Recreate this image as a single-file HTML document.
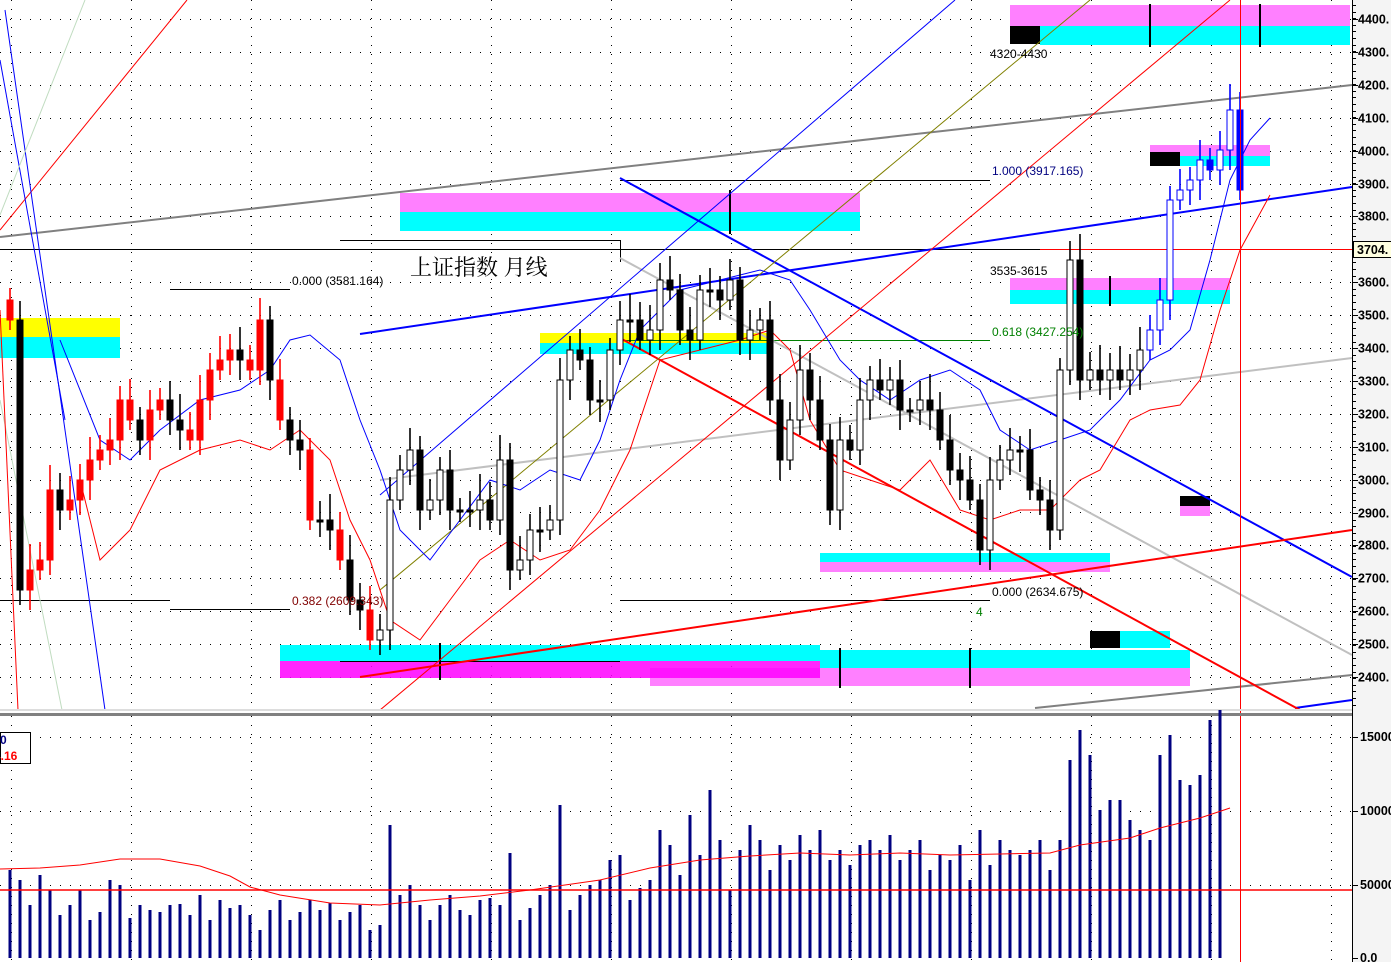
<!DOCTYPE html>
<html><head><meta charset="utf-8"><style>
body{margin:0;background:#fff;width:1391px;height:962px;overflow:hidden}
svg{display:block;font-family:"Liberation Sans","Noto Sans CJK SC",sans-serif}
.ax{font-size:12.5px;font-weight:bold}
</style></head><body>
<svg id="s" width="1391" height="962" xmlns="http://www.w3.org/2000/svg">
<rect width="1391" height="962" fill="#fff"/>
<g id="grid" stroke="#000" stroke-dasharray="1,9" stroke-width="1"></g>
<rect x="1010" y="5" width="340" height="21" fill="#ff80ff"/>
<rect x="1040" y="26" width="310" height="19" fill="#00ffff"/>
<rect x="1010" y="26" width="30" height="18" fill="#000"/>
<rect x="400" y="193" width="460" height="19" fill="#ff80ff"/>
<rect x="400" y="212" width="460" height="19" fill="#00ffff"/>
<rect x="0" y="318" width="120" height="19" fill="#ffff00"/>
<rect x="0" y="337" width="120" height="21" fill="#00ffff"/>
<rect x="540" y="333" width="230" height="10" fill="#ffff00"/>
<rect x="540" y="343" width="230" height="11" fill="#00ffff"/>
<rect x="1010" y="278" width="220" height="12" fill="#ff80ff"/>
<rect x="1010" y="290" width="220" height="14" fill="#00ffff"/>
<rect x="1150" y="145" width="120" height="11" fill="#ff80ff"/>
<rect x="1150" y="156" width="120" height="10" fill="#00ffff"/>
<rect x="1150" y="152" width="30" height="14" fill="#000"/>
<rect x="1180" y="496" width="30" height="10" fill="#000"/>
<rect x="1180" y="506" width="30" height="10" fill="#ff80ff"/>
<rect x="820" y="553" width="290" height="9" fill="#00ffff"/>
<rect x="820" y="562" width="290" height="10" fill="#ff80ff"/>
<rect x="650" y="668" width="540" height="18" fill="#ff80ff"/>
<rect x="820" y="650" width="370" height="18" fill="#00ffff"/>
<rect x="280" y="645" width="540" height="16" fill="#00ffff"/>
<rect x="280" y="661" width="540" height="17" fill="#ff00ff" opacity=".85"/>
<rect x="1090" y="631" width="80" height="17" fill="#00ffff"/>
<rect x="1090" y="631" width="30" height="17" fill="#000"/>
<g stroke="#000" stroke-width="2">
<line x1="1150" y1="4" x2="1150" y2="47"/><line x1="1260" y1="4" x2="1260" y2="47"/>
<line x1="730" y1="190" x2="730" y2="234"/><line x1="1110" y1="276" x2="1110" y2="306"/>
<line x1="440" y1="643" x2="440" y2="680"/><line x1="840" y1="648" x2="840" y2="688"/><line x1="970" y1="648" x2="970" y2="688"/>
</g>
<g stroke="#000" stroke-width="1">
<line x1="0" y1="249.5" x2="1352" y2="249.5"/>
<line x1="620" y1="180.5" x2="990" y2="180.5"/>
<line x1="170" y1="289.5" x2="290" y2="289.5"/>
<polyline points="340,240.5 620.5,240.5 620.5,262" fill="none"/>
<line x1="0" y1="600.5" x2="170" y2="600.5"/>
<line x1="170" y1="609.5" x2="290" y2="609.5"/>
<line x1="620" y1="600.5" x2="990" y2="600.5"/>
<line x1="340" y1="661.5" x2="620" y2="661.5"/>
</g>
<line x1="620" y1="340.5" x2="990" y2="340.5" stroke="#008000"/>
<line x1="1040" y1="249.5" x2="1352" y2="249.5" stroke="#f00"/>
<g fill="none">
<line x1="0" y1="237" x2="1352" y2="85" stroke="#808080" stroke-width="2"/>
<line x1="380" y1="480" x2="1352" y2="358" stroke="#c0c0c0" stroke-width="2"/>
<line x1="620" y1="258" x2="1352" y2="655" stroke="#c0c0c0" stroke-width="2"/>
<line x1="1035" y1="708" x2="1352" y2="675" stroke="#808080" stroke-width="2"/>
<line x1="360" y1="334" x2="1352" y2="187" stroke="#0000ff" stroke-width="2"/>
<line x1="620" y1="178" x2="1352" y2="577" stroke="#0000ff" stroke-width="2"/>
<line x1="1295" y1="708" x2="1352" y2="700" stroke="#0000ff" stroke-width="2"/>
<line x1="620" y1="338" x2="1300" y2="710" stroke="#f00" stroke-width="2"/>
<line x1="360" y1="677" x2="1352" y2="530" stroke="#f00" stroke-width="2"/>
<line x1="380" y1="495" x2="955" y2="0" stroke="#0000ff"/>
<line x1="380" y1="710" x2="1230" y2="0" stroke="#f00"/>
<line x1="380" y1="590" x2="1090" y2="0" stroke="#808000"/>
<line x1="0" y1="230" x2="187" y2="0" stroke="#f00"/>
<line x1="5" y1="10" x2="105" y2="710" stroke="#0000ff"/>
<line x1="0" y1="60" x2="65" y2="420" stroke="#0000ff"/>
<line x1="85" y1="0" x2="0" y2="215" stroke="#c0dcc0"/>
<line x1="0" y1="400" x2="62" y2="710" stroke="#c0dcc0"/>
<line x1="0" y1="310" x2="18" y2="710" stroke="#f00"/>
<polyline stroke="#0000ff" points="60,340 100,440 130,460 160,430 200,400 240,390 270,370 290,340 310,335 340,360 360,420 380,470 400,530 430,560 460,520 490,480 520,490 550,470 580,480 600,440 620,380 640,330 680,290 720,280 760,270 790,280 810,310 840,360 860,380 890,400 920,380 950,370 980,390 1000,430 1030,450 1060,440 1090,430 1120,400 1150,360 1170,350 1190,330 1210,260 1230,180 1250,140 1270,118"/>
<polyline stroke="#f00" points="80,480 100,560 130,530 160,470 200,450 240,440 270,450 300,430 330,460 350,520 370,560 390,620 420,640 450,600 480,560 510,540 540,560 570,550 600,510 630,450 660,360 700,350 740,340 770,330 790,350 810,420 840,470 870,480 900,490 930,460 960,510 990,520 1020,510 1050,510 1080,480 1100,470 1130,420 1150,410 1180,405 1200,380 1220,310 1240,250 1270,195"/>
</g>
<g id="candles"></g>
<line x1="1240.5" y1="0" x2="1240.5" y2="962" stroke="#f00"/>
<g font-size="12">
<text x="990" y="58">4320-4430</text>
<text x="992" y="175" fill="#000080">1.000 (3917.165)</text>
<text x="292" y="285">0.000 (3581.164)</text>
<text x="990" y="275">3535-3615</text>
<text x="992" y="336" fill="#008000">0.618 (3427.254)</text>
<text x="292" y="605" fill="#800000">0.382 (2609.343)</text>
<text x="992" y="596">0.000 (2634.675)</text>
<text x="976" y="616" fill="#008000">4</text>
</g>
<text x="410" y="275" font-size="22" font-family="'Noto Serif CJK SC','Noto Sans CJK SC',serif">上证指数 月线</text>
<rect x="0" y="709" width="1391" height="2" fill="#ddd"/>
<rect x="0" y="713" width="1391" height="3" fill="#808080"/>
<g id="vol"></g>
<line x1="0" y1="890" x2="1352" y2="890" stroke="#f00" stroke-width="1.5"/>
<polyline fill="none" stroke="#f00" points="0,869 40,868 80,865 120,859 160,859 200,866 230,876 250,887 280,895 330,903 380,905 430,900 480,896 530,890 600,880 650,868 700,860 750,856 800,853 850,855 900,853 950,855 1000,854 1050,853 1080,845 1130,838 1160,828 1200,818 1230,808"/>
<rect x="0.5" y="732.5" width="30" height="31" fill="#fff" stroke="#000"/>
<text x="0" y="744" font-size="12" font-weight="bold" fill="#000080">0</text>
<text x="-6" y="760" font-size="12" font-weight="bold" fill="#f00">4.16</text>
<rect x="1352" y="0" width="39" height="962" fill="#f4f4f4"/>
<line x1="1352.5" y1="0" x2="1352.5" y2="962" stroke="#000"/>
<g id="axis" class="ax"></g>
<rect x="1353.5" y="241.5" width="38" height="16" fill="#ffffe0" stroke="#000"/>
<text x="1357" y="254" class="ax">3704.</text>
</svg>
<script>
var NS="http://www.w3.org/2000/svg",s=document.getElementById('s');
function el(p,t,a){var e=document.createElementNS(NS,t);for(var k in a)e.setAttribute(k,a[k]);p.appendChild(e);return e;}
var g=document.getElementById('grid');
for(var y=19;y<700;y+=32.9){var yy=Math.round(y)+.5;el(g,'line',{x1:0,y1:yy,x2:1352,y2:yy});}
for(var x=11.5;x<1352;x+=120){el(g,'line',{x1:x,y1:0,x2:x,y2:709,'stroke-dasharray':'1,8'});el(g,'line',{x1:x,y1:716,x2:x,y2:962,'stroke-dasharray':'1,8'});}
[737.5,811.5,885.5].forEach(function(y){el(g,'line',{x1:0,y1:y,x2:1352,y2:y});});
var ax=document.getElementById('axis');
for(var i=0;i<=20;i++){var p=4400-i*100,y=Math.round(19+i*32.9)+.5;if(p==3700)continue;el(ax,'line',{x1:1353,y1:y,x2:1358,y2:y,stroke:'#000'});var t=el(ax,'text',{x:1358,y:y+4});t.textContent=p+'.';}
for(var y=5;y<709;y+=6.6){var yy=Math.round(y)+.5;el(ax,'line',{x1:1353,y1:yy,x2:1356,y2:yy,stroke:'#000'});}
[[737,'15000'],[811,'10000'],[885,'50000'],[958,'0.0']].forEach(function(a){el(ax,'line',{x1:1353,y1:a[0]+.5,x2:1358,y2:a[0]+.5,stroke:'#000'});var t=el(ax,'text',{x:1360,y:a[0]+4});t.textContent=a[1];});
var c=[320,590,570,560,490,510,500,480,460,450,440,400,420,440,410,400,420,430,440,400,370,360,350,360,370,320,380,420,440,450,520,520,530,560,600,610,640,630,500,470,450,510,500,470,510,510,510,500,520,460,570,560,530,530,520,380,350,360,400,400,350,320,320,340,330,280,290,330,340,290,290,300,280,340,330,320,400,460,420,370,400,440,510,440,450,400,380,390,380,410,410,400,410,440,470,480,500,550,480,460,450,450,490,500,530,370,260,380,370,380,370,380,370,350,330,300,200,190,180,160,170,150,110,190];
var cg=document.getElementById('candles'),prev=300;
c.forEach(function(v,i){var x=10+i*10,up=v<prev,top=Math.min(v,prev),bot=Math.max(v,prev);if(bot-top<2)bot=top+2;
var col=x>=1150?'#0000ff':(up?(x<380?'#f00':'#000'):(x<380&&i%3==0?'#f00':'#000'));
el(cg,'line',{x1:x,y1:top-12-(i*7%15),x2:x,y2:bot+10+(i*5%15),stroke:col,'stroke-width':1.6});
el(cg,'rect',{x:x-3,y:top,width:6,height:bot-top,fill:(up&&x>=380)?'#fff':col,stroke:col});prev=v;});
var vh=[870,880,905,875,890,915,905,890,920,912,880,885,918,905,910,912,905,904,915,895,920,900,908,905,915,930,910,900,920,912,900,910,903,920,912,905,930,925,825,895,885,905,920,905,895,910,915,900,898,905,853,920,908,895,885,805,910,895,885,880,860,855,900,888,880,830,845,875,815,855,790,840,890,850,825,840,870,845,860,835,850,830,860,850,865,845,840,850,835,860,850,840,870,855,860,845,880,830,865,840,850,855,850,840,870,840,760,730,755,810,800,800,820,830,840,755,735,780,785,775,720,710];
var vg=document.getElementById('vol');
vh.forEach(function(y,i){var x=10+i*10;el(vg,'rect',{x:x-1.5,y:y,width:3,height:958-y,fill:'#000080'});});
</script>
</body></html>
